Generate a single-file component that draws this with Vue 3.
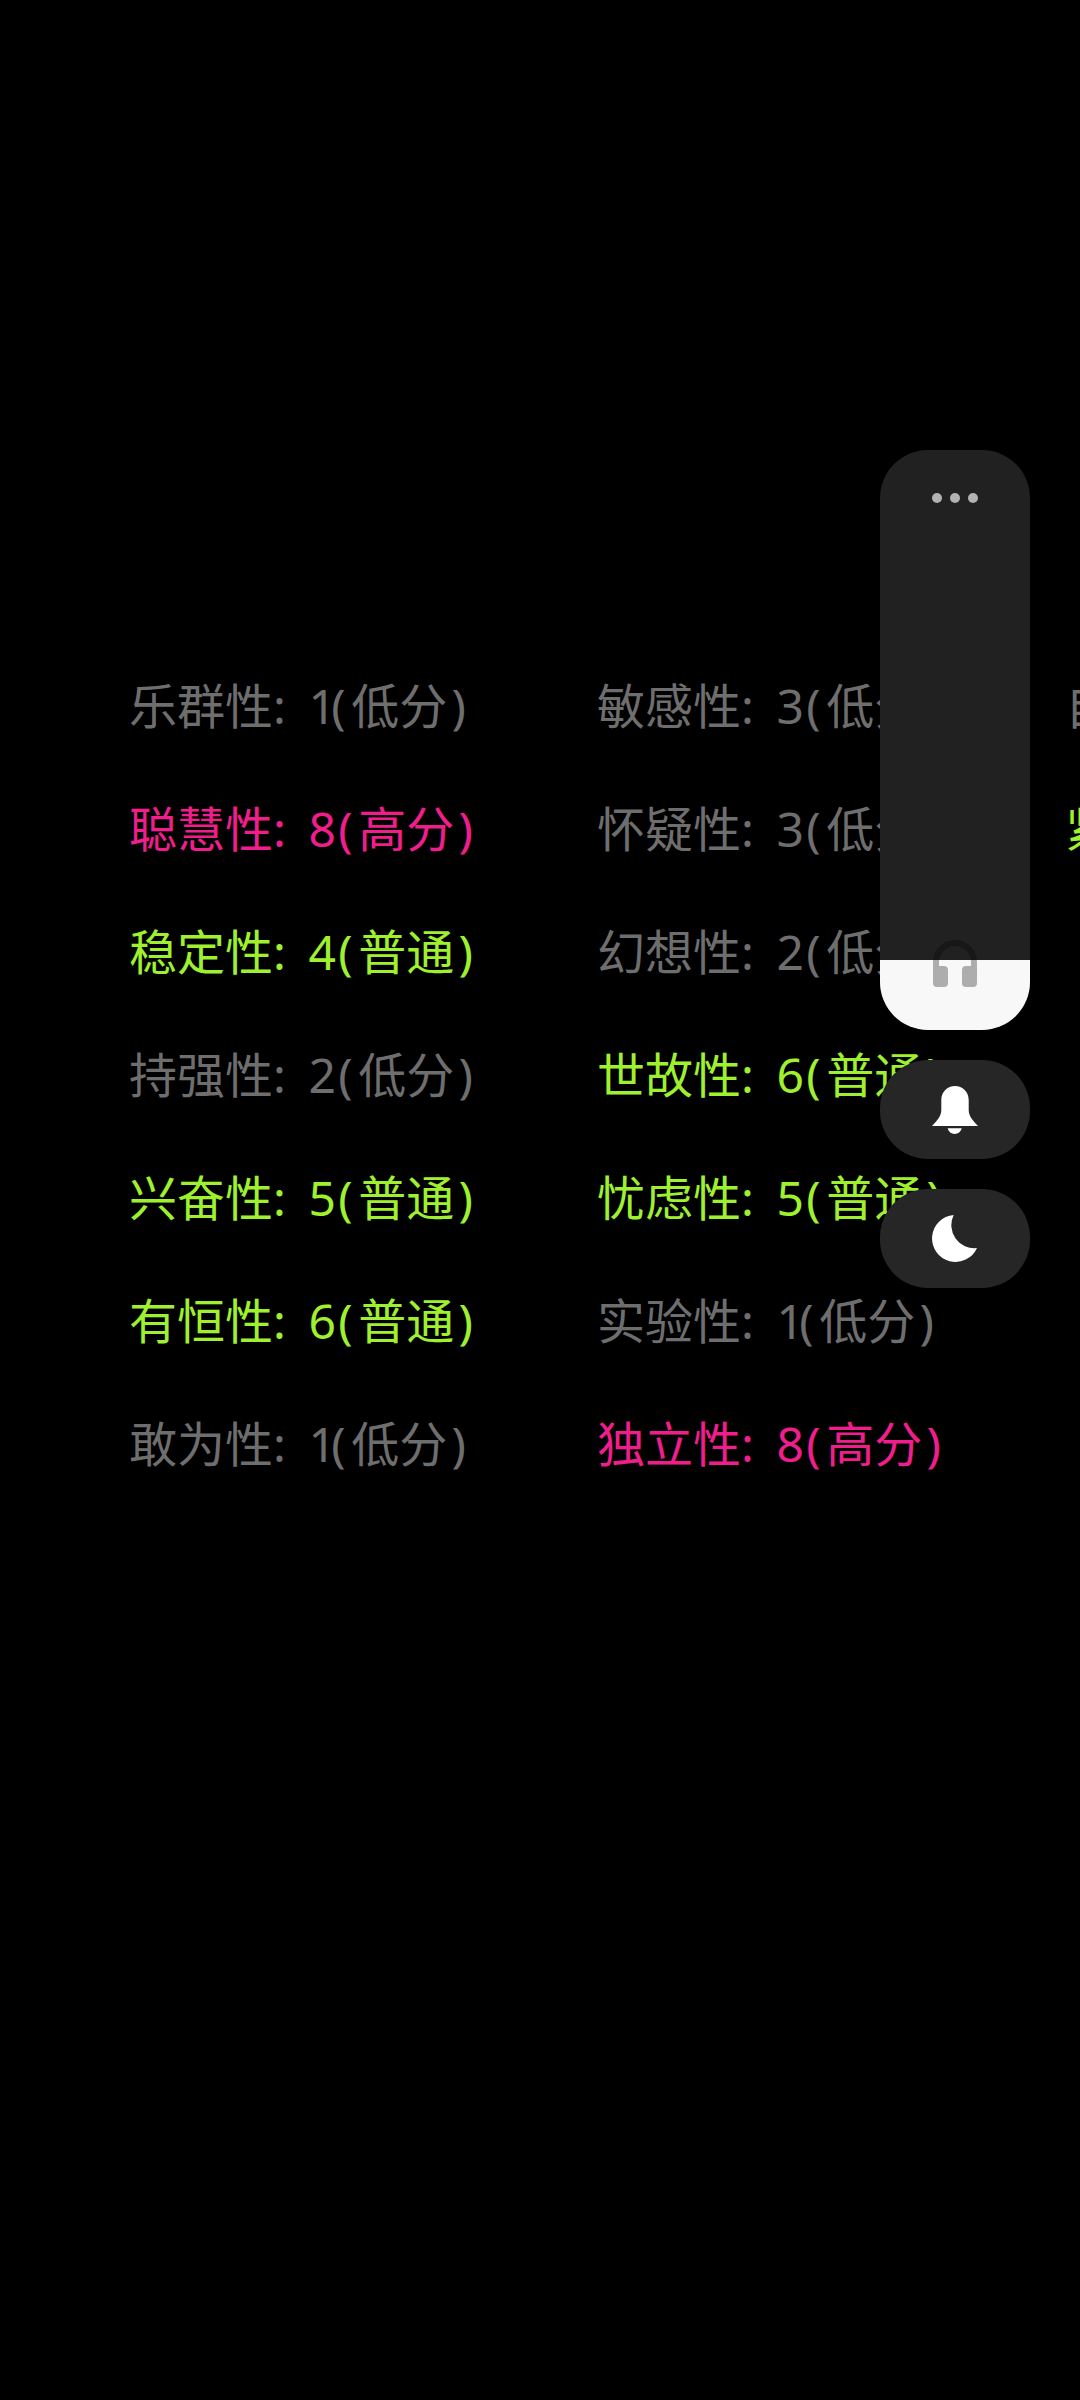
<script setup>
const low = '低分'
const mid = '普通'
const high = '高分'
const columns = [
  [
    { name: '乐群性', score: 1, tone: 'low', level: low },
    { name: '聪慧性', score: 8, tone: 'high', level: high },
    { name: '稳定性', score: 4, tone: 'mid', level: mid },
    { name: '持强性', score: 2, tone: 'low', level: low },
    { name: '兴奋性', score: 5, tone: 'mid', level: mid },
    { name: '有恒性', score: 6, tone: 'mid', level: mid },
    { name: '敢为性', score: 1, tone: 'low', level: low }
  ],
  [
    { name: '敏感性', score: 3, tone: 'low', level: low },
    { name: '怀疑性', score: 3, tone: 'low', level: low },
    { name: '幻想性', score: 2, tone: 'low', level: low },
    { name: '世故性', score: 6, tone: 'mid', level: mid },
    { name: '忧虑性', score: 5, tone: 'mid', level: mid },
    { name: '实验性', score: 1, tone: 'low', level: low },
    { name: '独立性', score: 8, tone: 'high', level: high }
  ],
  [
    { name: '自律性', score: 3, tone: 'low', level: low },
    { name: '紧张性', score: 6, tone: 'mid', level: mid }
  ]
]
</script>

<template>
  <main class="screen">
    <section class="results">
      <ul v-for="(col, i) in columns" :key="i" class="column">
        <li v-for="item in col" :key="item.name" class="row" :class="item.tone">{{ item.name }}<span class="sep">: </span><span class="digit" :class="{ one: item.score === 1 }">{{ item.score }}</span><span class="open">(</span>{{ item.level }}<span class="close">)</span></li>
      </ul>
    </section>

    <aside class="controls">
      <div class="volume">
        <div class="dots"><i></i><i></i><i></i></div>
        <div class="fill"></div>
        <svg class="phones" width="44" height="47" viewBox="0 0 44 47">
          <path d="M3 26V22a19 19 0 0 1 38 0v4" fill="none" stroke="rgba(0,0,0,.3)" stroke-width="6" />
          <path d="M0 26h11a4 4 0 0 1 4 4v13a4 4 0 0 1-4 4H4a4 4 0 0 1-4-4zM44 26H33a4 4 0 0 0-4 4v13a4 4 0 0 0 4 4h7a4 4 0 0 0 4-4z" fill="rgba(0,0,0,.3)" />
        </svg>
      </div>
      <button class="pill">
        <svg width="46" height="48" viewBox="0 0 46 48">
          <path d="M23 0c7.600 0 13.700 6.100 13.700 13.700V24c0 6 4 10.500 9.300 16H0c5.300-5.500 9.300-10 9.300-16V13.700C9.300 6.100 15.400 0 23 0zM15.700 42.300h14c-.8 3.400-3.600 5.700-7 5.700s-6.200-2.300-7-5.700z" fill="#fff" />
        </svg>
      </button>
      <button class="pill">
        <svg width="46" height="47" viewBox="0 0 46 47">
          <path d="M21.700 0A23.500 23.500 0 1 0 45 33 23 23 0 0 1 21.700 0z" fill="#fff" />
        </svg>
      </button>
    </aside>
  </main>
</template>

<style scoped>
.screen {
  position: relative;
  width: 1080px;
  height: 2400px;
  overflow: hidden;
  background: #000;
  font-family: "Noto Sans CJK SC", sans-serif;
}
.results {
  display: flex;
  padding: 642px 0 0 129px;
}
.column {
  flex: 0 0 468px;
  margin: 0;
  padding: 0;
  list-style: none;
}
.row {
  height: 123px;
  font-size: 48px;
  line-height: 123px;
  white-space: pre;
}
.sep, .digit, .open, .close {
  font-family: "Noto Sans", "Noto Sans CJK SC", sans-serif;
}
.sep { letter-spacing: 5px; }
.digit { letter-spacing: 2.5px; }
.digit.one { letter-spacing: -4.5px; }
.open { letter-spacing: 5.6px; }
.close { margin-left: 4px; }
.low { color: #6e6e6e; }
.mid { color: #9ff02e; }
.high { color: #f01e8c; }
.controls {
  position: absolute;
  top: 450px;
  left: 880px;
  width: 150px;
  display: flex;
  flex-direction: column;
  gap: 30px;
}
.volume {
  position: relative;
  height: 580px;
  border-radius: 48px;
  overflow: hidden;
  background: #212121;
  display: flex;
  flex-direction: column;
}
.dots {
  display: flex;
  justify-content: center;
  gap: 8px;
  padding-top: 43px;
}
.dots i {
  width: 10px;
  height: 10px;
  border-radius: 50%;
  background: #b2b2b2;
}
.fill {
  margin-top: auto;
  height: 70px;
  background: #f8f8f8;
}
.phones {
  position: absolute;
  left: 53px;
  bottom: 43px;
}
.pill {
  height: 99px;
  padding: 0;
  border: 0;
  border-radius: 48px;
  background: #262626;
  display: flex;
  align-items: center;
  justify-content: center;
}
</style>

<style>
html, body { margin: 0; background: #000; }
</style>
